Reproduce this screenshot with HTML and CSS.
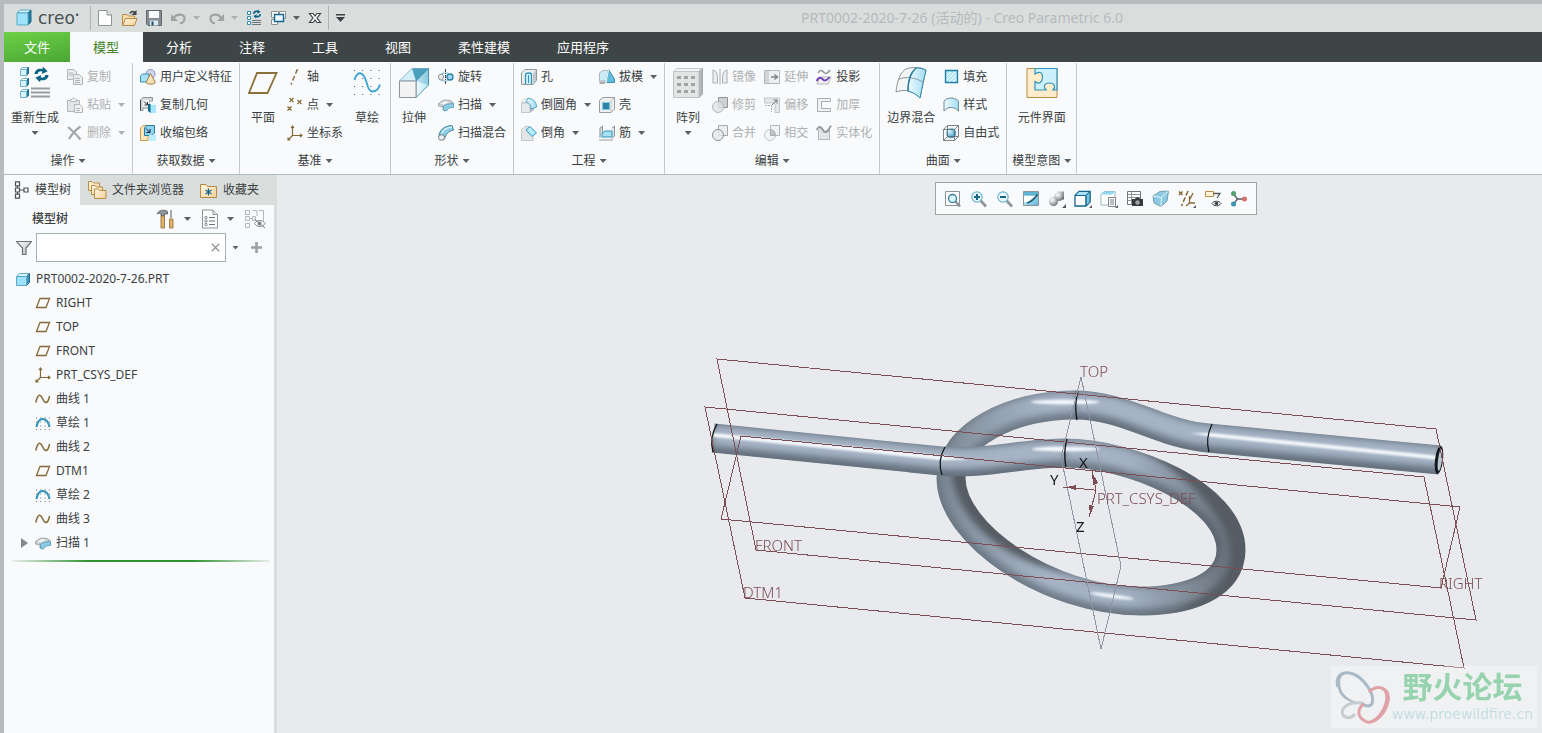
FILE: index.html
```html
<!DOCTYPE html>
<html lang="zh-CN">
<head>
    <meta charset="UTF-8">
    <meta name="viewport" content="width=device-width, initial-scale=1.0">
    <title>PRT0002-2020-7-26 (活动的) - Creo Parametric 6.0</title>
    <link rel="stylesheet" href="styles.css">
</head>
<body>

<!-- shared icons and gradients -->
<svg class="sprite" width="0" height="0" aria-hidden="true">
    <defs>
        <linearGradient id="blue" x1="0" y1="0" x2="1" y2="1"><stop offset="0" stop-color="#f2fbff"/><stop offset="1" stop-color="#58b6d8"/></linearGradient>
        <linearGradient id="cyan" x1="0" y1="0" x2="1" y2="0"><stop offset="0" stop-color="#eefaff"/><stop offset="1" stop-color="#a3def3"/></linearGradient>
        <linearGradient id="gold" x1="0" y1="0" x2="1" y2="1"><stop offset="0" stop-color="#fff8e4"/><stop offset="1" stop-color="#efd09a"/></linearGradient>
        <linearGradient id="grey" x1="0" y1="0" x2="1" y2="1"><stop offset="0" stop-color="#ffffff"/><stop offset="1" stop-color="#b4b8ba"/></linearGradient>
        <radialGradient id="ball" cx=".35" cy=".3" r=".8"><stop offset="0" stop-color="#ffffff"/><stop offset=".4" stop-color="#c9cbcc"/><stop offset="1" stop-color="#5f6467"/></radialGradient>
        <radialGradient id="drop" cx=".35" cy=".35" r=".7"><stop offset="0" stop-color="#dff6ff"/><stop offset="1" stop-color="#2f93bd"/></radialGradient>
    </defs>
    <symbol id="i-cube" viewBox="0 0 16 16">
        <path d="M1.500 5.500 4.500 2.500H14.500L11.500 5.500Z" fill="#d9f4fd" stroke="#5ba9c6"/>
        <path d="M11.500 5.500 14.500 2.500V11.500L11.500 14.500Z" fill="#3c95b8" stroke="#1c6e92"/>
        <path d="M1.500 5.500H11.500V14.500H1.500Z" fill="#9fe3fa" stroke="#5ba9c6"/>
    </symbol>
    <symbol id="i-minicube" viewBox="0 0 9 9">
        <path d="M.5 2.500 2.500.5H8.500L6.500 2.500Z" fill="#fff" stroke="#6fb3cc"/>
        <path d="M6.500 2.500 8.500.5V6.500L6.500 8.500Z" fill="#2a7c9d" stroke="#1c6e92"/>
        <path d="M.5 2.500H6.500V8.500H.5Z" fill="#d8f3fc" stroke="#6fb3cc"/>
    </symbol>
    <symbol id="i-plane" viewBox="0 0 16 16">
        <path d="M5 3.500H14.500L11 12.500H1.500Z" fill="none" stroke="#856a38" stroke-width="1.300"/>
    </symbol>
    <symbol id="i-csys" viewBox="0 0 16 16">
        <path d="M5.500 1V10.500H15M5.500 10.500 1 15M4 3 5.500 1 7 3M13 9 15 10.500 13 12M1 12.500V15H3.500" fill="none" stroke="#856a38" stroke-width="1.200"/>
    </symbol>
    <symbol id="i-curve" viewBox="0 0 16 16">
        <path d="M.8 11.500C2 6 3.500 3.800 5 4.200C7.500 4.800 8 11.500 10.800 11.500C12.800 11.500 14 8 14.600 5" fill="none" stroke="#856a38" stroke-width="1.500"/>
    </symbol>
    <symbol id="i-sketch" viewBox="0 0 16 16">
        <path d="M1 3H15M1 7H15M1 11H15M1 14.500H15" stroke="#6d7173" stroke-dasharray="1 3.300" fill="none"/>
        <path d="M1.500 12C2.500 6.500 5 4 7.500 4C11 4 13.500 7 14.500 12" fill="none" stroke="#2f93bd" stroke-width="2"/>
    </symbol>
    <symbol id="i-sweep" viewBox="0 0 16 16">
        <path d="M.5 6.500 6 3 12 3.500 15 5.500 15 9 9 10 7 14 5 13V10L.5 9Z" fill="#c9ced0" stroke="#90979b" stroke-width=".8"/>
        <path d="M2 6.500 7 4 12 4.500 6 7.500Z" fill="#f1f3f4"/>
        <path d="M5.500 9C8 7 11 7 15.500 6.500V10.500C12 10.500 10 11 8.500 14L5.500 13Z" fill="#8ccbe2" stroke="#4d9dbb" stroke-width=".8"/>
    </symbol>
    <symbol id="i-regen" viewBox="0 0 18 18">
        <path d="M1.500 8.500C2 4 6 1.800 10 3.200L10.500.8 15.500 5.500 9.500 8.500 9.800 6C7.500 5 5.200 6.200 5 8.500Z" fill="#0d6384"/>
        <path d="M16.500 9.500C16 14 12 16.200 8 14.800L7.500 17.200 2.500 12.500 8.500 9.500 8.200 12C10.500 13 12.800 11.800 13 9.500Z" fill="#0d6384"/>
    </symbol>
</svg>

<header class="titlebar">
    <div class="brand">
        <svg width="16" height="18" viewBox="0 0 16 18"><path d="M1 4 4 1H15L12 4Z" fill="#cdf0fb" stroke="#5ba9c6"/><path d="M12 4 15 1V13L12 16Z" fill="#2a7c9d" stroke="#17688c"/><path d="M1 4H12V16H1Z" fill="#9fe3fa" stroke="#5ba9c6"/></svg>
        <span class="brand-name">creo<sup>•</sup></span>
    </div>
    <div class="quick">
        <button title="新建"><svg width="16" height="18" viewBox="0 0 16 18"><path d="M1.500 1.500H10L14.500 6V16.500H1.500Z" fill="#fff" stroke="#8e9396"/><path d="M10 1.500V6H14.500" fill="#dfe3e4" stroke="#8e9396"/></svg></button>
        <button title="打开"><svg width="17" height="18" viewBox="0 0 17 18"><path d="M1.500 16V5.500H6L7.500 7H13.500V16Z" fill="#f6dda9" stroke="#b98c45"/><path d="M1.500 16.500 4.500 9.500H16L13.500 16.500Z" fill="url(#gold)" stroke="#b98c45"/><path d="M9 4.500C10.500 2 12 2 14 3.500" fill="none" stroke="#3b4144" stroke-width="1.600"/><path d="M15.500 1V6H10.500Z" fill="#3b4144"/></svg></button>
        <button title="保存"><svg width="16" height="18" viewBox="0 0 16 18"><path d="M.5 1.500H15.500V16.500H2L.5 15Z" fill="#878d90" stroke="#5f6669"/><path d="M3 2H13V9H3Z" fill="#f7f9fa"/><path d="M4 11.500H12V16.500H4Z" fill="#d5edf7"/><path d="M5.500 12.500H7.500V16.500H5.500Z" fill="#2b4b5b"/></svg></button>
        <button title="撤消" disabled><svg width="17" height="18" viewBox="0 0 17 18"><path d="M4 9C6 4.500 15 4 14.500 10C14.300 13 12 14 10 14.500" fill="none" stroke="#9ea4a5" stroke-width="2.200"/><path d="M1 5V12H8Z" fill="#9ea4a5"/></svg></button>
        <button title="撤消列表" disabled><span class="caret"></span></button>
        <button title="重做" disabled><svg width="17" height="18" viewBox="0 0 17 18"><path d="M13 9C11 4.500 2 4 2.500 10C2.700 13 5 14 7 14.500" fill="none" stroke="#9ea4a5" stroke-width="2.200"/><path d="M16 5V12H9Z" fill="#9ea4a5"/></svg></button>
        <button title="重做列表" disabled><span class="caret"></span></button>
        <button title="重新生成"><svg width="16" height="18" viewBox="0 0 16 18"><g fill="#fff" stroke="#2f8db1"><path d="M1.500 2.500H4.500V5.500H1.500ZM1.500 7.500H4.500V10.500H1.500ZM1.500 12.500H4.500V15.500H1.500Z"/></g><use href="#i-regen" x="6" y="0" width="10" height="10"/><path d="M6 11.500H15M6 13.500H15M6 15.500H15" stroke="#6d7477"/></svg></button>
        <button title="窗口"><svg width="17" height="18" viewBox="0 0 17 18"><g fill="#fff" stroke="#8b9194"><path d="M1.500 2.500H8.500V8.500H1.500Z"/><path d="M9.500 2.500H15.500V9.500H9.500Z"/><path d="M1.500 10.500H7.500V15.500H1.500Z"/></g><path d="M4.500 5.500H13.500V12.500H4.500Z" fill="#e9f8fe" stroke="#14668a" stroke-width="1.400"/></svg></button>
        <button title="窗口列表"><span class="caret"></span></button>
        <button title="关闭"><svg width="14" height="18" viewBox="0 0 14 18"><path d="M1.500 4.500H5L7 7 9 4.500H12.500L9 9 12.500 13.500H9L7 11 5 13.500H1.500L5 9Z" fill="#fff" stroke="#3b4144" stroke-width="1.200"/></svg></button>
    </div>
    <button class="customize" title="自定义"><svg width="9" height="8" viewBox="0 0 9 8"><path d="M0 0H9V1.500H0ZM0 3H9L4.500 8Z" fill="#3b4144"/></svg></button>
    <h1>PRT0002-2020-7-26 (活动的) - Creo Parametric 6.0</h1>
</header>

<nav class="tabs">
    <button class="tab file">文件</button>
    <button class="tab active">模型</button>
    <button class="tab">分析</button>
    <button class="tab">注释</button>
    <button class="tab">工具</button>
    <button class="tab">视图</button>
    <button class="tab">柔性建模</button>
    <button class="tab">应用程序</button>
</nav>

<section class="ribbon">
    <div class="group">
        <div class="tools">
            <button class="big"><svg width="32" height="32" viewBox="0 0 32 32"><use href="#i-minicube" x="1" y="0" width="9" height="9"/><use href="#i-minicube" x="1" y="11" width="9" height="9"/><use href="#i-minicube" x="1" y="22" width="9" height="9"/><use href="#i-regen" x="14" y="-1" width="17" height="17"/><path d="M12 21.500H31M12 25.500H31M12 29.500H31" stroke="#979c9f" stroke-width="2"/></svg>重新生成<span class="caret"></span></button>
            <div class="stack">
                <button class="small" disabled><svg width="16" height="16" viewBox="0 0 16 16"><g fill="#e9ebec" stroke="#b3b7b9"><path d="M.5.5H7L9.500 3V10.500H.5Z"/><path d="M6.500 5.500H12L15.500 8.500V15.500H6.500Z"/></g><path d="M2 4H6M2 6H6M8 9.500H13M8 11.500H13M8 13.500H13" stroke="#b3b7b9"/></svg>复制</button>
                <button class="small" disabled><svg width="16" height="16" viewBox="0 0 16 16"><path d="M.5 3.500H12.500V14.500H.5Z" fill="#e3e6e7" stroke="#b3b7b9"/><path d="M3.500 4.500V2.500H5L6.500.5 8 2.500H9.500V4.500Z" fill="#f4f5f5" stroke="#b3b7b9"/><path d="M7.500 7.500H12.500L15.500 10V15.500H7.500Z" fill="#f1f2f3" stroke="#b3b7b9"/><path d="M9 11.500H13M9 13.500H13" stroke="#b3b7b9"/></svg>粘贴<span class="caret"></span></button>
                <button class="small" disabled><svg width="16" height="16" viewBox="0 0 16 16"><path d="M1 2C6 6 10 10 13.500 14.500M13.500 1.500C8 5 5 9 2 14" fill="none" stroke="#a3a7a9" stroke-width="2.200"/></svg>删除<span class="caret"></span></button>
            </div>
        </div>
        <button class="group-label">操作<span class="caret"></span></button>
    </div>

    <div class="group">
        <div class="tools">
            <div class="stack">
                <button class="small"><svg width="16" height="16" viewBox="0 0 16 16"><circle cx="10.500" cy="5" r="4.500" fill="#cfd8ee" stroke="#8a92b5"/><path d="M.5 7 2.500 5H9V13H.5Z" fill="#a9e2f6" stroke="#3b93b4"/><path d="M10.500 4.500 15.500 13.500C14 15.800 7.500 15.800 6 13.500Z" fill="url(#gold)" stroke="#a07e46"/></svg>用户定义特征</button>
                <button class="small"><svg width="16" height="16" viewBox="0 0 16 16"><path d="M.5 3 3 .5H12.500V4H9V11H3V13.500H.5Z" fill="#d5d9da" stroke="#8e9598"/><path d="M3 3H9V10H3Z" fill="#f6f7f7"/><path d="M.5 3V13.500" stroke="#3b4144"/><path d="M4 4.500 7 7.500M4.500 8H7.500V5" fill="none" stroke="#222"/><path d="M10 8H16V16H10Z" fill="#a5e6fb"/><path d="M9 8 11 6H16V8Z" fill="#e7f9ff"/><path d="M8 7H10.500V16L8 14Z" fill="#12688a"/></svg>复制几何</button>
                <button class="small"><svg width="16" height="16" viewBox="0 0 16 16"><path d="M.5 3 3 .5H8V15.500H.5Z" fill="#fbe6b9" stroke="#c79c54"/><path d="M4.500 3 6.500.5H14.500V8L12 10.500H4.500Z" fill="#8bd3ee" stroke="#2a7c9d"/><path d="M6 3.500 9.500 7M6.500 7.500H10V4" fill="none" stroke="#123"/><path d="M9 10H16V16H9Z" fill="#bdeefe"/></svg>收缩包络</button>
            </div>
        </div>
        <button class="group-label">获取数据<span class="caret"></span></button>
    </div>

    <div class="group">
        <div class="tools">
            <button class="big"><svg width="32" height="32" viewBox="0 0 32 32"><path d="M10 6H29.500L20.500 26H2Z" fill="none" stroke="#8b6f3a" stroke-width="1.800"/></svg>平面</button>
            <div class="stack">
                <button class="small"><svg width="16" height="16" viewBox="0 0 16 16"><path d="M10.500 0 4 15.500" stroke="#856a38" stroke-width="1.400" stroke-dasharray="5 2.500"/></svg>轴</button>
                <button class="small"><svg width="16" height="16" viewBox="0 0 16 16"><path d="M2.500 1 6.500 5M6.500 1 2.500 5M10.500 3 14.500 7M14.500 3 10.500 7M.5 9.500 4.500 13.500M4.500 9.500.5 13.500" stroke="#856a38" stroke-width="1.300"/></svg>点<span class="caret"></span></button>
                <button class="small"><svg width="16" height="16"><use href="#i-csys"/></svg>坐标系</button>
            </div>
            <button class="big"><svg width="32" height="32" viewBox="0 0 32 32"><path d="M3 3.500H31M3 11.500H31M3 19.500H31M3 27.500H31" stroke="#54585a" stroke-dasharray="1 7.200" fill="none"/><path d="M3.500 13C5 7 8 5 11 7C17 11 15 25 22 24.500C26 24 28 21 29 17.500" fill="none" stroke="#38a3d3" stroke-width="1.800"/></svg>草绘</button>
        </div>
        <button class="group-label">基准<span class="caret"></span></button>
    </div>

    <div class="group">
        <div class="tools">
            <button class="big"><svg width="32" height="32" viewBox="0 0 32 32"><path d="M1.500 14 14 1.500H30.500L18 14Z" fill="#d2effa" stroke="#8ab9ca"/><path d="M14 1.500H30.500V18L18 14Z" fill="#4a9fbe"/><path d="M18 14 30.500 1.500V18L18 30.500Z" fill="url(#cyan)" stroke="#4c93ae" fill-opacity=".7"/><path d="M1.500 14H18V30.500H1.500Z" fill="#f3f3f3" stroke="#8e9396"/></svg>拉伸</button>
            <div class="stack">
                <button class="small"><svg width="16" height="16" viewBox="0 0 16 16"><path d="M7.500 0V16" stroke="#3b4144" stroke-dasharray="3 1 1 1"/><ellipse cx="3" cy="8" rx="2.500" ry="3" fill="#e7ebec" stroke="#8e9598"/><circle cx="12" cy="8" r="3" fill="#9adcf3" stroke="#2a7c9d" stroke-width="1.300"/><path d="M3 5C6 3.500 9 3.500 12 5M3 11C6 12.500 9 12.500 12 11" fill="none" stroke="#76b4ca"/></svg>旋转</button>
                <button class="small"><svg width="16" height="16"><use href="#i-sweep"/></svg>扫描<span class="caret"></span></button>
                <button class="small"><svg width="16" height="16" viewBox="0 0 16 16"><path d="M1 12C1 5 6 1 14 .5L15.500 5C10 6 8 9 6.500 14Z" fill="#8ed0e8" stroke="#3b7f99"/><path d="M4 8C6 4 9 2.500 14 2" fill="none" stroke="#fff"/><ellipse cx="3.500" cy="12.500" rx="3" ry="2.800" fill="#eceeef" stroke="#777d80"/></svg>扫描混合</button>
            </div>
        </div>
        <button class="group-label">形状<span class="caret"></span></button>
    </div>

    <div class="group">
        <div class="tools">
            <div class="stack">
                <button class="small"><svg width="16" height="16" viewBox="0 0 16 16"><path d="M.5 4 4 .5H15.500V11.500L12 15.500H.5Z" fill="#eceeef" stroke="#90979b"/><path d="M12 4.500 15 1V11L12 15Z" fill="#c3c7c9"/><path d="M4.500 15V5.500C4.500 3.500 10.500 3.500 10.500 5.500V15" fill="#d3f1fb" stroke="#2f93bd" stroke-width="1.300"/><path d="M7.500 6V14" stroke="#2f93bd"/></svg>孔</button>
                <button class="small"><svg width="16" height="16" viewBox="0 0 16 16"><path d="M.5 6H9V15.500H.5Z" fill="#e6e8e9" stroke="#c3c7c9"/><path d="M9 15.500V10L13 10V13Z" fill="#b6babc"/><path d="M1 4.500 4 1.500H8V5.500H1Z" fill="#f4f5f5" stroke="#c3c7c9" stroke-width=".8"/><path d="M7 1.200C12 1.500 15.500 5 15.500 10L10 12C10 8 8.500 6 5 5Z" fill="url(#cyan)" stroke="#2f93bd" stroke-width=".8"/></svg>倒圆角<span class="caret"></span></button>
                <button class="small"><svg width="16" height="16" viewBox="0 0 16 16"><path d="M.5 5 4 1.500H8L12 12V15.500H.5Z" fill="#e2e5e6" stroke="#c3c7c9"/><path d="M9 1.500 15.500 8 11 11.500 5 5Z" fill="#b5eafb" stroke="#2f93bd"/></svg>倒角<span class="caret"></span></button>
            </div>
            <div class="stack">
                <button class="small"><svg width="16" height="16" viewBox="0 0 16 16"><path d="M.5 4 4 1.500H10V12H.5Z" fill="#c9ebf6" stroke="#b0b7ba"/><path d="M.5 12.500 6 12.500V15H.5Z" fill="#a9adaf"/><path d="M9.500.5 15.500 10V13.500H7Z" fill="#66bddb" stroke="#3b8fae"/><path d="M9.500.5 7 14" stroke="#fff"/></svg>拔模<span class="caret"></span></button>
                <button class="small"><svg width="16" height="16" viewBox="0 0 16 16"><path d="M.5 3.500 3.500.5H15.500V12L12 15.500H.5Z" fill="#eef0f0" stroke="#969da0"/><path d="M12 4V15M12 4 15 1" stroke="#c3c7c9"/><path d="M3.500 5.500H10.500V12.500H3.500Z" fill="#2e83a6" stroke="#7fc6e0"/></svg>壳</button>
                <button class="small"><svg width="16" height="16" viewBox="0 0 16 16"><path d="M1 13V3L3.500 1V8M13 3 15.500 1V11L13 13.500" fill="#dfe3e4" stroke="#8e9598"/><path d="M3 8.500 6 6H13V12H3Z" fill="#a8e0f4" stroke="#2f93bd"/><path d="M.5 15H14" stroke="#3b4144" stroke-dasharray="1 1"/></svg>筋<span class="caret"></span></button>
            </div>
        </div>
        <button class="group-label">工程<span class="caret"></span></button>
    </div>

    <div class="group">
        <div class="tools">
            <button class="big"><svg width="32" height="32" viewBox="0 0 32 32"><path d="M1.500 4.500 5 1.500H30.500L27 4.500Z" fill="#f3f4f4" stroke="#c3c7c9"/><path d="M27 4.500 30.500 1.500V27L27 30.500Z" fill="#b0b4b6" stroke="#a4a9ab"/><path d="M1.500 4.500H27V30.500H1.500Z" fill="#e3e5e5" stroke="#bfc3c5"/><g fill="#9ea3a5"><path d="M5 9h4v3h-4zM12 9h4v3h-4zM19 9h4v3h-4zM5 16h4v3h-4zM12 16h4v3h-4zM19 16h4v3h-4zM5 23h4v3h-4zM12 23h4v3h-4zM19 23h4v3h-4z"/></g></svg>阵列<span class="caret"></span></button>
            <div class="stack">
                <button class="small" disabled><svg width="16" height="16" viewBox="0 0 16 16"><path d="M1 1C5 2 5.500 4 5.500 14H1ZM15 1C11 2 10.500 4 10.500 14H15Z" fill="#eceeef" stroke="#aaaeb0"/><path d="M8 0V16" stroke="#aaaeb0"/></svg>镜像</button>
                <button class="small" disabled><svg width="16" height="16" viewBox="0 0 16 16"><path d="M6.500.5H15.500V10.500H6.500Z" fill="#cfd2d3" stroke="#8f9496"/><circle cx="6" cy="10" r="5.500" fill="#e1e3e4" fill-opacity=".8" stroke="#b3b7b9"/></svg>修剪</button>
                <button class="small" disabled><svg width="16" height="16" viewBox="0 0 16 16"><path d="M6.500.5H15.500V10.500H6.500Z" fill="#eceeef" stroke="#a4a8aa"/><circle cx="6" cy="10" r="5.500" fill="#e6e8e9" fill-opacity=".8" stroke="#8f9496"/></svg>合并</button>
            </div>
            <div class="stack">
                <button class="small" disabled><svg width="16" height="16" viewBox="0 0 16 16"><path d="M.5 1.500H15.500V14.500H.5Z" fill="#eceeef" stroke="#b3b7b9"/><path d="M1 2H5V14H1Z" fill="#d2d5d6"/><path d="M7 8H13M10.500 5.500 13.500 8 10.500 10.500" fill="none" stroke="#7d8284" stroke-width="1.300"/></svg>延伸</button>
                <button class="small" disabled><svg width="16" height="16" viewBox="0 0 16 16"><path d="M.5 1H15.500V15.500H11V6H.5Z" fill="#e3e5e6" stroke="#c3c7c9"/><path d="M1 8.500H7.500V15" fill="none" stroke="#a4a8aa" stroke-dasharray="2 1"/><path d="M8 8 13 3M9.500 3H13V6.500" fill="none" stroke="#6f7476"/></svg>偏移</button>
                <button class="small" disabled><svg width="16" height="16" viewBox="0 0 16 16"><path d="M6.500.5H15.500V10.500H6.500Z" fill="#f1f2f3" stroke="#b3b7b9"/><circle cx="6" cy="10" r="5.500" fill="#eceeef" fill-opacity=".6" stroke="#c3c7c9"/><path d="M6.500 5C10 5 11.500 8 11 10.500H6.500Z" fill="#c3c7c9" stroke="#a4a8aa"/></svg>相交</button>
            </div>
            <div class="stack">
                <button class="small"><svg width="16" height="16" viewBox="0 0 16 16"><path d="M2 4C4 .5 6 1 8 3.500C10 5.500 12 4 14 1" fill="none" stroke="#8e9396" stroke-width="1.500"/><path d="M1 15 4 8H15L12 15Z" fill="#f1f2f3" stroke="#b3b7b9"/><path d="M.5 12C3 7.500 5 8.500 7 10.500C9 12.500 11 11 13.500 8" fill="none" stroke="#7240b5" stroke-width="1.900"/></svg>投影</button>
                <button class="small" disabled><svg width="16" height="16" viewBox="0 0 16 16"><path d="M1.500 1.500H14.500V4.500H5.500V11.500H14.500V14.500H1.500Z" fill="#f1f2f3" stroke="#aaaeb0"/></svg>加厚</button>
                <button class="small" disabled><svg width="16" height="16" viewBox="0 0 16 16"><path d="M2.500 5V14.500H13.500V3L8 8 5 3Z" fill="#e3e5e6" stroke="#b3b7b9"/><path d="M.5 5C3 .5 5 1 7 5C9 8.500 12 7 13 4C13.500 2 14 1.500 15.500 1" fill="none" stroke="#8f9496" stroke-width="1.700"/></svg>实体化</button>
            </div>
        </div>
        <button class="group-label">编辑<span class="caret"></span></button>
    </div>

    <div class="group">
        <div class="tools">
            <button class="big"><svg width="32" height="32" viewBox="0 0 32 32"><path d="M1 25C2 13 6 4 12 1.500C18 0 26 0 31 3C29 11 27 21 25 31C18 23 9 22 1 25Z" fill="#f4f5f5" stroke="#8e9598"/><path d="M21 1C25 1 28 1.500 31 3.500C29 11 27 21 25 31C21 27 17 25 13 24C13 14 15 6 21 1Z" fill="url(#cyan)" stroke="#2a86a8"/><path d="M4 12C12 9 21 11 28 15" fill="none" stroke="#8e9598"/><path d="M13 24C13 14 15 6 21 1" fill="none" stroke="#2a7c9d" stroke-width="1.500"/></svg>边界混合</button>
            <div class="stack">
                <button class="small"><svg width="16" height="16" viewBox="0 0 16 16"><path d="M2.500 1.500H14.500V13.500H2.500Z" fill="#b4e7f8" stroke="#1f7ea3" stroke-width="1.300"/><path d="M4 7 8 3M4 11 12 3M6 13 13 6M10 13 13 10" stroke="#fff"/></svg>填充</button>
                <button class="small"><svg width="16" height="16" viewBox="0 0 16 16"><path d="M1 14V4C5 0 11 0 15.500 4V14C13 11.500 11 10.500 8 10.500C5 10.500 3 11.500 1 14Z" fill="url(#cyan)" stroke="#6d8d99"/></svg>样式</button>
                <button class="small"><svg width="16" height="16" viewBox="0 0 16 16"><circle cx="8" cy="8" r="5.200" fill="url(#drop)"/><path d="M.5 4.500H11.500V15.500H.5ZM4.500.5H15.500V11.500M.5 4.500 4.500.5M11.500 4.500 15.500.5M11.500 15.500 15.500 11.500M4.500.5V11.500H15.500M.5 15.500 4.500 11.500" fill="none" stroke="#5f6669" stroke-width=".8"/></svg>自由式</button>
            </div>
        </div>
        <button class="group-label">曲面<span class="caret"></span></button>
    </div>

    <div class="group">
        <div class="tools">
            <button class="big"><svg width="32" height="32" viewBox="0 0 32 32"><path d="M1 1.500H31V30.500H1Z" fill="#ffeccb" stroke="#b98c45"/><path d="M9 1.500H31V23H27C30 20 28.500 16 23.500 16C18 16 17 20 20 23H9V14.500C13 18 16.500 15 16.500 10.500C16.500 5 13 4 9 7Z" fill="#cdf1fc" stroke="#2f93bd" stroke-width="1.200"/></svg>元件界面</button>
        </div>
        <button class="group-label">模型意图<span class="caret"></span></button>
    </div>
</section>

<main class="work">
    <aside class="navigator">
        <div class="nav-tabs">
            <button class="nav-tab active"><svg width="16" height="18" viewBox="0 0 16 18"><g fill="#fff" stroke="#4a4f52" stroke-width="1.200"><path d="M1.500.8H5.500V4.800H1.500ZM1.500 7H5.500V11H1.500ZM1.500 13.200H5.500V17.200H1.500ZM10 7H14V11H10Z"/></g><path d="M3.500 5V7M3.500 11V13M6 9H10" stroke="#4a4f52"/></svg>模型树</button>
            <button class="nav-tab"><svg width="19" height="18" viewBox="0 0 19 18"><g fill="url(#gold)" stroke="#b98c45"><path d="M.5 9.500V.5H4L5.500 2H11.500V9.500Z"/><path d="M3.500 13.500V4.500H7L8.500 6H14.500V13.500Z"/><path d="M6.500 17.500V8H10L11.500 9.500H18V17.500Z"/></g></svg>文件夹浏览器</button>
            <button class="nav-tab"><svg width="18" height="18" viewBox="0 0 18 18"><path d="M.5 16.500V3.500H6L7.500 5.500H16.500V16.500Z" fill="url(#gold)" stroke="#b98c45"/><path d="M8.500 7.500V14.500M5.500 9 11.500 13M11.500 9 5.500 13" stroke="#14668a" stroke-width="1.200"/></svg>收藏夹</button>
        </div>
        <div class="nav-head">
            <h2>模型树</h2>
            <button title="设置"><svg width="18" height="20" viewBox="0 0 18 20"><path d="M.5 4C3 .5 8 .5 10.500 2.500V5H7.500V7H4V5C3 4 2 4 .5 5Z" fill="#8e9598" stroke="#54595c" stroke-width=".8"/><path d="M4 7H7.500V19H4Z" fill="#e0b368" stroke="#8d6a34" stroke-width=".8"/><path d="M14 1V9" stroke="#8e9598" stroke-width="1.600"/><path d="M12.500 10H16V19H12.500Z" fill="#e0b368" stroke="#8d6a34" stroke-width=".8"/></svg><span class="caret"></span></button>
            <button title="显示"><svg width="16" height="20" viewBox="0 0 16 20"><path d="M.5 1H11L15.500 5.500V19H.5Z" fill="#fbfcfc" stroke="#8e9396"/><path d="M11 1V5.500H15.500" fill="#dfe3e4" stroke="#8e9396"/><path d="M7 8.500H13M7 12H13M7 15.500H13" stroke="#6d7477"/><g fill="none" stroke="#6d7477" stroke-width=".8"><circle cx="4" cy="8.500" r="1.200"/><circle cx="4" cy="12" r="1.200"/><circle cx="4" cy="15.500" r="1.200"/></g></svg><span class="caret"></span></button>
            <button title="隐藏" disabled><svg width="21" height="20" viewBox="0 0 21 20"><g fill="none" stroke="#b3b7b9"><path d="M.5 1.500H4.500V5.500H.5ZM.5 7.500H4.500V11.500H.5ZM.5 14.500H4.500V18.500H.5ZM7.500 7.500H10.500V11.500H7.500ZM5 9.500H7.500M7.500 1.500H12V7M14 1.500H18.500V12"/></g><path d="M9.500 14.500C12 10.500 17.500 10.500 20 14.500C17.500 18.500 12 18.500 9.500 14.500Z" fill="#fff" stroke="#7d8284"/><circle cx="14.500" cy="14.500" r="2" fill="#7d8284"/><path d="M9.500 10 20 19" stroke="#7d8284"/></svg></button>
        </div>
        <div class="filter">
            <svg width="16" height="16" viewBox="0 0 16 16"><path d="M.5 1.500H15.500L10 8V14.500H6.500V8Z" fill="url(#grey)" stroke="#6d7477" stroke-width="1.200"/></svg>
            <div class="filter-box">
                <input type="text" aria-label="过滤模型树">
                <button class="clear" title="清除"><svg width="9" height="9" viewBox="0 0 9 9"><path d="M.8.8 8.200 8.200M8.200.8.8 8.200" stroke="#8e9396" stroke-width="1.300"/></svg></button>
            </div>
            <button title="搜索选项"><span class="caret"></span></button>
            <button title="添加"><svg width="11" height="11" viewBox="0 0 11 11"><path d="M5.500 0V11M0 5.500H11" stroke="#9a9fa1" stroke-width="2.600"/></svg></button>
        </div>
        <ul class="tree">
            <li class="root"><svg width="16" height="16"><use href="#i-cube"/></svg>PRT0002-2020-7-26.PRT</li>
            <li><svg width="16" height="16"><use href="#i-plane"/></svg>RIGHT</li>
            <li><svg width="16" height="16"><use href="#i-plane"/></svg>TOP</li>
            <li><svg width="16" height="16"><use href="#i-plane"/></svg>FRONT</li>
            <li><svg width="16" height="16"><use href="#i-csys"/></svg>PRT_CSYS_DEF</li>
            <li><svg width="16" height="16"><use href="#i-curve"/></svg>曲线 1</li>
            <li><svg width="16" height="16"><use href="#i-sketch"/></svg>草绘 1</li>
            <li><svg width="16" height="16"><use href="#i-curve"/></svg>曲线 2</li>
            <li><svg width="16" height="16"><use href="#i-plane"/></svg>DTM1</li>
            <li><svg width="16" height="16"><use href="#i-sketch"/></svg>草绘 2</li>
            <li><svg width="16" height="16"><use href="#i-curve"/></svg>曲线 3</li>
            <li class="expandable"><button class="expand" title="展开"></button><svg width="16" height="16"><use href="#i-sweep"/></svg>扫描 1</li>
        </ul>
        <div class="insert-here"></div>
    </aside>

    <section class="viewport">
        <svg class="model" viewBox="277 175 1265 558">
            <defs>
                <path id="ring" d="M1065 453C1130 453 1231 495 1231 550C1231 585 1190 601 1140 601C1050 601 951 535 951 478C951 436 1010 405 1076 405"/>
                <path id="right-arm" d="M1075 405C1125 405 1160 434 1208 438L1440 460"/>
                <path id="left-arm" d="M713 438 941 461C985 465 1020 453 1066 453"/>
                <mask id="ring-mask" maskUnits="userSpaceOnUse" x="700" y="350" width="780" height="320"><use href="#ring" class="tube" stroke="#fff" stroke-width="29"/></mask>
                <mask id="right-mask" maskUnits="userSpaceOnUse" x="700" y="350" width="780" height="320"><use href="#right-arm" class="tube" stroke="#fff" stroke-width="29"/></mask>
                <mask id="left-mask" maskUnits="userSpaceOnUse" x="700" y="350" width="780" height="320"><use href="#left-arm" class="tube" stroke="#fff" stroke-width="29"/></mask>
                <filter id="soft" filterUnits="userSpaceOnUse" x="680" y="340" width="800" height="340"><feGaussianBlur stdDeviation="3.500"/></filter>
                <filter id="shine" filterUnits="userSpaceOnUse" x="680" y="340" width="800" height="340"><feGaussianBlur stdDeviation="1.200"/></filter>
                <linearGradient id="ring-base" gradientUnits="userSpaceOnUse" x1="936" y1="0" x2="1246" y2="0">
                    <stop offset="0" stop-color="#6b7682"/><stop offset=".35" stop-color="#6f7b88"/><stop offset=".65" stop-color="#6b7682"/><stop offset="1" stop-color="#535a63"/>
                </linearGradient>
                <linearGradient id="ring-face" gradientUnits="userSpaceOnUse" x1="936" y1="0" x2="1246" y2="0">
                    <stop offset="0" stop-color="#788491"/><stop offset=".12" stop-color="#8b98a6"/><stop offset=".35" stop-color="#a5b3c5"/><stop offset=".62" stop-color="#a3b1c3"/><stop offset=".85" stop-color="#7b8692"/><stop offset="1" stop-color="#5d646e"/>
                </linearGradient>
            </defs>

            <g mask="url(#ring-mask)">
                <use href="#ring" class="tube" stroke="url(#ring-base)" stroke-width="30"/>
                <use href="#ring" class="tube" stroke="url(#ring-face)" stroke-width="21" filter="url(#soft)" y="-3"/>
                <g fill="#545b64" filter="url(#soft)">
                    <path d="M1130 440C1190 460 1254 510 1252 552C1250 585 1215 605 1170 616C1215 595 1234 575 1231 550C1228 520 1190 475 1130 440Z"/>
                    <path d="M972 462C974 505 1010 548 1070 572C1005 563 955 520 951 470Z"/>
                </g>
                <g fill="#f0f5fb" filter="url(#shine)">
                    <ellipse cx="1065" cy="402" rx="34" ry="2.500"/>
                    <ellipse cx="1066" cy="449" rx="34" ry="2.500"/>
                    <ellipse cx="1112" cy="596" rx="22" ry="2" transform="rotate(8 1112 596)"/>
                </g>
            </g>

            <g mask="url(#right-mask)">
                <use href="#right-arm" class="tube" stroke="#64707c" stroke-width="30"/>
                <use href="#right-arm" class="tube" stroke="#a5b3c5" stroke-width="21" filter="url(#soft)" y="-3"/>
                <g fill="#f5f9fd" filter="url(#shine)">
                    <path d="M1190 433 1212 433 1440 456V460L1212 437Z"/>
                    <ellipse cx="1065" cy="402" rx="34" ry="2.500"/>
                </g>
            </g>

            <g mask="url(#left-mask)">
                <use href="#left-arm" class="tube" stroke="#64707c" stroke-width="30"/>
                <use href="#left-arm" class="tube" stroke="#a5b3c5" stroke-width="21" filter="url(#soft)" y="-3"/>
                <g fill="#f5f9fd" filter="url(#shine)">
                    <path d="M713 433 945 456 970 460 940 460 713 437Z"/>
                    <ellipse cx="1066" cy="449" rx="34" ry="2.500"/>
                </g>
            </g>

            <!-- section edges -->
            <g class="edge">
                <path d="M717 424Q709 438 713 452"/>
                <path d="M945 447Q937 461 942 475"/>
                <path d="M1067 439Q1063 453 1066 467"/>
                <path d="M1078 391Q1074 406 1077 420"/>
                <path d="M1212 424Q1205 439 1209 452"/>
            </g>
            <ellipse cx="1439" cy="460" rx="4" ry="14" transform="rotate(7 1439 460)" fill="#14171a"/>
            <ellipse cx="1440" cy="460" rx="2" ry="11" transform="rotate(7 1440 460)" fill="#b9c6d4"/>

            <!-- datum planes -->
            <g class="datum">
                <path d="M717 359 1436 429 1476 620 756 550Z"/>
                <path d="M705 407 1424 477 1464 668 745 598Z"/>
                <path d="M741 436 1460 507 1441 588 721 519Z"/>
                <path class="edge-on" d="M1081 377 1121 566 1101 649 1061 457Z"/>
            </g>

            <!-- coordinate system -->
            <g class="datum">
                <path d="M1096 490H1094L1063 487M1096 490 1092 471M1096 490 1089 517"/>
                <path class="head" d="M1066 487 1076 485V490ZM1092 472 1098 483 1093 485ZM1090 515 1089 505 1094 506Z"/>
            </g>

            <g class="labels">
                <text x="1080" y="377">TOP</text>
                <text x="755" y="551">FRONT</text>
                <text x="743" y="598">DTM1</text>
                <text x="1439" y="589">RIGHT</text>
                <text x="1097" y="504">PRT_CSYS_DEF</text>
                <text class="axis" x="1079" y="468">X</text>
                <text class="axis" x="1050" y="485">Y</text>
                <text class="axis" x="1076" y="532">Z</text>
            </g>
        </svg>

        <div class="view-bar">
            <button title="重新调整"><svg width="18" height="18" viewBox="0 0 18 18"><path d="M1.500 1.500H15.500V15.500H1.500Z" fill="#fff" stroke="#8e9396"/><path d="M11.500 11.500 16 16.500" stroke="#8e9396" stroke-width="2.600"/><circle cx="8.500" cy="8.500" r="4" fill="#dff5fd" stroke="#2f7fa0" stroke-width="1.300"/></svg></button>
            <button title="放大"><svg width="18" height="18" viewBox="0 0 18 18"><path d="M10.500 10.500 16 16.500" stroke="#8e9396" stroke-width="2.600"/><circle cx="7" cy="7" r="5.200" fill="#eaf8fd" stroke="#6fb3cc" stroke-width="1.200"/><path d="M7 4V10M4 7H10" stroke="#14668a" stroke-width="2"/></svg></button>
            <button title="缩小"><svg width="18" height="18" viewBox="0 0 18 18"><path d="M10.500 10.500 16 16.500" stroke="#8e9396" stroke-width="2.600"/><circle cx="7" cy="7" r="5.200" fill="#eaf8fd" stroke="#6fb3cc" stroke-width="1.200"/><path d="M4 7H10" stroke="#14668a" stroke-width="2"/></svg></button>
            <button title="重画"><svg width="18" height="18" viewBox="0 0 18 18"><path d="M1.500 1.500H16.500V15.500H1.500Z" fill="url(#blue)" stroke="#8e9396"/><path d="M2 6H14L6 12 2 12Z" fill="#fff"/><path d="M2 2H16V5.500H2Z" fill="#5fb2d0"/><path d="M5 13C9 12 13 8 15.500 4.500" fill="none" stroke="#1f5d78" stroke-width="1.800"/></svg></button>
            <button title="显示样式"><svg width="18" height="18" viewBox="0 0 18 18"><path d="M9 1.500H16V9.500H9Z" fill="url(#ball)"/><circle cx="11" cy="6.500" r="4.500" fill="url(#ball)"/><circle cx="5.500" cy="11.500" r="4.500" fill="url(#ball)"/><path d="M18 14V18H14Z" fill="#54595c"/></svg></button>
            <button title="着色"><svg width="18" height="18" viewBox="0 0 18 18"><path d="M1 5.500 5 1.500H16V12L12 16H1Z" fill="#fff" stroke="#14668a" stroke-width="1.300"/><path d="M1 5.500 5 1.500H16L12 5.500Z" fill="#a9e2f6" stroke="#14668a"/><path d="M12 5.500V16M12 5.500 16 1.500V12L12 16Z" fill="#7cc5de" stroke="#14668a"/><path d="M18 15V18H15Z" fill="#54595c"/></svg></button>
            <button title="已保存方向"><svg width="18" height="18" viewBox="0 0 18 18"><path d="M1 4.500 4 1.500H15V12L12 15H1Z" fill="#fff" stroke="#9ab9c5"/><path d="M1 4.500 4 1.500H15L12 4.500Z" fill="#8fd6ef"/><path d="M8.500 7.500H15.500V16.500H8.500Z" fill="#f7f8f8" stroke="#7d8284"/><path d="M10 10H14M10 12H14M10 14H14" stroke="#7d8284"/><path d="M18 15V18H15Z" fill="#54595c"/></svg></button>
            <button title="视图管理器"><svg width="18" height="18" viewBox="0 0 18 18"><path d="M1.500 1.500H14.500V14.500H1.500Z" fill="#fff" stroke="#6d7477"/><path d="M1.500 4.500H14.500M1.500 7.500H14.500M1.500 10.500H14.500M5.500 1.500V14.500" stroke="#8e9396"/><path d="M6 9H9L10 7.500H13L14 9H17V16H6Z" fill="#34393b"/><circle cx="11.500" cy="12.500" r="2.200" fill="#9fa4a6"/></svg></button>
            <button title="透视图"><svg width="18" height="18" viewBox="0 0 18 18"><path d="M1 6 8 1.500 16.500 1 15 11 9 16.500 2 13Z" fill="#8ecbe3" stroke="#6f9fb3"/><path d="M1 6 9.500 7.500 16.500 1M9.500 7.500 9 16.500" fill="none" stroke="#e7f6fc"/></svg></button>
            <button title="基准显示"><svg width="18" height="18" viewBox="0 0 18 18"><path d="M1 1.500 4.500 5M4.500 1.500 1 5M10 1 3.500 16" stroke="#856a38" stroke-width="1.500" stroke-dasharray="5 2"/><path d="M15 3 12 9M11.500 6V13H17M11.500 13 8 16" fill="none" stroke="#856a38" stroke-width="1.300"/><path d="M18 15V18H15Z" fill="#54595c"/></svg></button>
            <button title="注释显示"><svg width="18" height="18" viewBox="0 0 18 18"><path d="M1.500 1.500H9.500V6.500H1.500Z" fill="#fff3dc" stroke="#b98c45"/><path d="M9.500 3.500H16L13 8" fill="none" stroke="#54595c" stroke-width="1.300"/><path d="M8 13.500C10 10.500 15 10.500 17 13.500C15 16.500 10 16.500 8 13.500Z" fill="#fff" stroke="#3b4144"/><circle cx="12.500" cy="13.500" r="1.800" fill="#3b4144"/></svg></button>
            <button title="旋转中心"><svg width="18" height="18" viewBox="0 0 18 18"><path d="M3.500 4 7.500 9 14 9M7.500 9 3.500 14" fill="none" stroke="#54595c" stroke-width="1.300"/><circle cx="3.500" cy="3.500" r="2.500" fill="#4fa36c"/><circle cx="3.500" cy="14" r="2.500" fill="#3b93b4"/><circle cx="14.500" cy="9" r="2.500" fill="#d4716c"/></svg></button>
        </div>

        <div class="watermark">
            <svg width="58" height="58" viewBox="0 0 58 58">
                <path d="M4 19C-1 4 17 -2 31 15C44 31 39 44 27 35" fill="none" stroke="#a9b9c6" stroke-width="3"/>
                <path d="M4 21C0 6 10 2 20 5C9 3 4 9 7 21C10 30 20 34 28 35C17 36 7 31 4 21Z" fill="#a9b9c6"/>
                <path d="M28 35C12 33 6 42 9 47C12 51 18 50 21 46" fill="none" stroke="#c6cdd1" stroke-width="3"/>
                <path d="M35 24C43 16 56 19 54 33C51 49 37 57 31 53C22 48 24 40 30 36" fill="none" stroke="#e0a2a6" stroke-width="3"/>
                <path d="M46 20C56 21 58 30 53 40C48 50 38 57 32 54C42 53 49 42 51 33C52 27 51 23 46 20Z" fill="#e0a2a6"/>
            </svg>
            <div class="watermark-text">
                <strong>野火论坛</strong>
                <a href="#">www.proewildfire.cn</a>
            </div>
        </div>
    </section>
</main>

</body>
</html>
```
FILE: styles.css
```css
* {
    box-sizing: border-box;
}
body {
    display: flex;
    flex-direction: column;
    height: 100vh;
    margin: 0;
    border: solid #b6bbbe;
    border-width: 4px 0 0 4px;
    background-color: #f8fafc;
    color: #3b3f42;
    font: 12px/16px "Noto Sans", "Noto Sans CJK SC", sans-serif;
    overflow: hidden;
}
h1, h2, ul {
    margin: 0;
    padding: 0;
    font-weight: normal;
    list-style: none;
}
button {
    display: flex;
    align-items: center;
    padding: 0;
    border: none;
    background: none;
    color: inherit;
    font: inherit;
    white-space: nowrap;
}
svg {
    display: block;
    flex: none;
}
.sprite {
    position: absolute;
}
.caret {
    width: 7px;
    height: 4px;
    background-color: #5c6063;
    clip-path: polygon(0 0, 100% 0, 50% 100%);
}
button:disabled {
    color: #adb1b3;
}
button:disabled .caret {
    background-color: #adb1b3;
}

/* title bar */
.titlebar {
    display: flex;
    align-items: center;
    height: 28px;
    background-color: #d9dedd;
}
.brand {
    display: flex;
    align-items: center;
    gap: 6px;
    width: 86px;
    padding-left: 12px;
}
.brand-name {
    color: #4a4f51;
    font: 17px/24px "DejaVu Sans", sans-serif;
}
.brand-name sup {
    font-size: 8px;
    line-height: 8px;
    vertical-align: 6px;
}
.quick {
    display: flex;
    align-items: center;
    gap: 8px;
    height: 24px;
    padding: 0 6px;
    border: solid #aeb3b4;
    border-width: 0 1px;
}
.quick .caret {
    margin-left: -2px;
}
.customize {
    padding: 0 7px;
}
.titlebar h1 {
    flex: 1;
    padding-left: 30px;
    color: #b5babc;
    font-size: 14px;
    text-align: center;
}

/* ribbon tabs */
.tabs {
    display: flex;
    height: 30px;
    background-color: #3e4546;
}
.tab {
    padding: 0 24px 0 23px;
    color: #fff;
    font-size: 13px;
}
.tab.file {
    padding: 0 20px;
    background: linear-gradient(170deg, #6bd045, #4ba636);
}
.tab.active {
    background-color: #f8fafc;
    color: #3f8326;
}

/* ribbon */
.ribbon {
    display: flex;
    flex: none;
    padding-top: 1px;
    border-bottom: 1px solid #aebbc0;
}
.group {
    display: flex;
    flex-direction: column;
    align-items: center;
    border-right: 1px solid #c3c8cb;
}
.tools {
    display: flex;
    gap: 8px;
    height: 84px;
    padding: 0 7px;
}
.big {
    flex-direction: column;
    min-width: 32px;
    padding-top: 4px;
}
.big svg {
    margin-bottom: 11px;
}
.big .caret {
    margin-top: 5px;
}
.small {
    gap: 4px;
    height: 28px;
}
.small .caret {
    margin-left: 3px;
}
.group-label {
    gap: 4px;
    height: 27px;
    padding: 1px 5px 0;
}

/* navigator */
.work {
    display: flex;
    flex: 1;
    min-height: 0;
}
.navigator {
    flex: none;
    width: 273px;
    border-right: 3px solid #d9dedd;
}
.nav-tabs {
    display: flex;
    height: 30px;
    background-color: #d9dedd;
}
.nav-tab {
    gap: 5px;
    padding: 0 8px;
}
.nav-tab.active {
    padding: 0 9px 0 10px;
    background-color: #f8fafc;
}
.nav-head {
    display: flex;
    align-items: center;
    gap: 11px;
    height: 28px;
    padding: 0 8px 0 28px;
}
.nav-head h2 {
    flex: 1;
    font-size: 12px;
    font-weight: 500;
}
.nav-head button {
    gap: 9px;
}
.filter {
    display: flex;
    align-items: center;
    gap: 4px;
    padding: 0 12px 5px;
}
.filter-box {
    position: relative;
    flex: 1;
    margin-right: 2px;
}
.filter-box input {
    display: block;
    width: 100%;
    height: 29px;
    padding: 0 24px 0 6px;
    border: 1px solid #a3b0b5;
    background-color: #fff;
    font: inherit;
}
.clear {
    position: absolute;
    top: 10px;
    right: 6px;
}
.filter > button:last-child {
    margin-left: 8px;
}
.tree li {
    display: flex;
    align-items: center;
    gap: 5px;
    height: 24px;
    padding-left: 31px;
}
.tree .root {
    padding-left: 11px;
}
.tree .expandable {
    padding-left: 17px;
}
.expand {
    width: 7px;
    height: 10px;
    margin-right: 2px;
    background-color: #85898b;
    clip-path: polygon(0 0, 100% 50%, 0 100%);
}
.insert-here {
    height: 2px;
    margin: 5px 4px 0 8px;
    background: linear-gradient(to right, #e9eeea, #2f9130 30%, #2f9130 70%, #e9eeea);
}

/* graphics area */
.viewport {
    position: relative;
    flex: 1;
    min-width: 0;
    background-color: #e8eaed;
}
.model {
    width: 100%;
    height: 100%;
}
.tube {
    fill: none;
}
.edge {
    fill: none;
    stroke: #14171a;
    stroke-width: 1.3;
}
.datum {
    fill: none;
    stroke: #7d4d54;
    shape-rendering: crispEdges;
}
.datum .edge-on {
    stroke: #9095a3;
}
.datum .head {
    fill: #7d4d54;
    stroke: none;
}
.labels {
    fill: #7d4d54;
    font-size: 15px;
    font-weight: 300;
}
.labels .axis {
    fill: #14171a;
    font-weight: 400;
}
.view-bar {
    position: absolute;
    top: 7px;
    right: 285px;
    display: flex;
    align-items: center;
    gap: 8px;
    height: 33px;
    padding: 0 8px;
    border: 1px solid #a3a4a0;
    background-color: #f8fafc;
}
.watermark {
    position: absolute;
    right: 5px;
    bottom: 5px;
    display: flex;
    align-items: center;
    height: 62px;
    padding: 0 4px 0 3px;
    background-color: rgba(255, 255, 255, 0.35);
}
.watermark-text {
    display: flex;
    flex-direction: column;
    align-items: center;
}
.watermark strong {
    color: #97d3ae;
    font-size: 30px;
    line-height: 34px;
}
.watermark a {
    color: #c3dee1;
    font: 14px/20px "DejaVu Sans", sans-serif;
    text-decoration: none;
}
```
